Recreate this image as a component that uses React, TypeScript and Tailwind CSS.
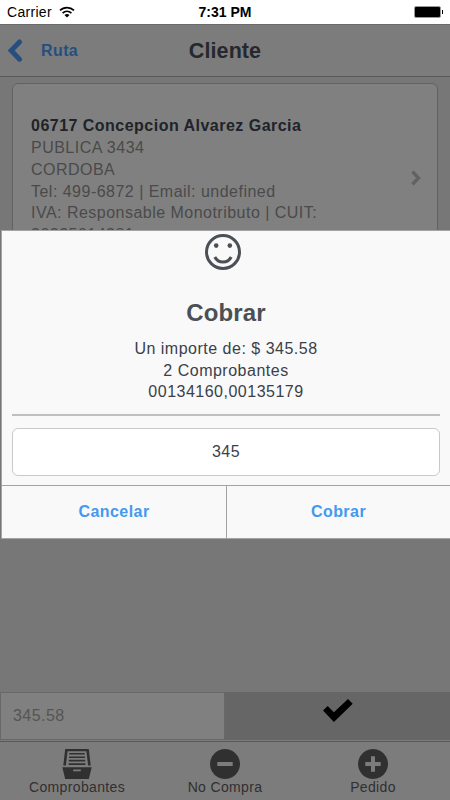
import React from "react";

const lines = [
  "PUBLICA 3434",
  "CORDOBA",
  "Tel: 499-6872 | Email: undefined",
  "IVA: Responsable Monotributo | CUIT:",
  "20225014281",
];

function StatusBar() {
  return (
    <div className="grid h-6 grid-cols-3 items-center bg-white text-[14px] text-black">
      <div className="flex items-center gap-[7px] pl-[7px]">
        <span className="tracking-[0.3px]">Carrier</span>
        <svg width="16" height="12" viewBox="0 0 16 12" fill="none" stroke="#000" strokeWidth="1.7">
          <path d="M1 4.4a10 10 0 0 1 14 0M3.6 7.1a6.2 6.2 0 0 1 8.8 0" />
          <path d="M8 11.6 5.5 9.1a3.6 3.6 0 0 1 5 0z" fill="#000" stroke="none" />
        </svg>
      </div>
      <span className="text-center font-bold">7:31 PM</span>
      <div className="flex items-center justify-end pr-[7px]">
        <div className="h-3 w-[27px] rounded-[2px] border border-[#999] bg-black" />
        <div className="ml-px h-1 w-px bg-black" />
      </div>
    </div>
  );
}

function Header() {
  return (
    <div className="grid h-[53px] grid-cols-3 items-center border-t border-b border-t-[#6b6b6b] border-b-[#595959] bg-[#7c7c7c]">
      <div className="flex items-center pl-[7px]">
        <svg width="16" height="24" viewBox="0 0 16 24" fill="none" stroke="#264f80" strokeWidth="5" strokeLinecap="round" strokeLinejoin="miter">
          <path d="M12.5 3 4.2 11.6l8.3 8.6" />
        </svg>
        <span className="ml-[18px] text-[16px] font-bold tracking-[0.4px] text-[#264f80]">Ruta</span>
      </div>
      <span className="text-center text-[21.5px] leading-[32px] font-bold tracking-[0.1px] text-[#25282c]">Cliente</span>
    </div>
  );
}

function Modal() {
  return (
    <div className="absolute top-[230px] left-[1px] flex h-[309px] w-[449px] flex-col border border-r-0 border-[#a3a3a3] bg-[#f9f9f9] text-center text-[#3b3f4a]">
      <div className="flex h-[43px] justify-center pt-[2px] pr-[7px]">
        <svg width="38" height="38" viewBox="0 0 38 38" fill="none" stroke="#4b4f56" strokeWidth="3">
          <circle cx="19" cy="19" r="16.5" />
          <circle cx="12.2" cy="12.6" r="2.3" fill="#4b4f56" stroke="none" />
          <circle cx="25.8" cy="12.6" r="2.3" fill="#4b4f56" stroke="none" />
          <path d="M10.8 24c3.5 6.8 12.9 6.8 16.4 0" />
        </svg>
      </div>
      <h2 className="mt-[23px] h-[32px] text-[24px] leading-[32px] font-bold tracking-[0.15px] text-[#4b4f56]">Cobrar</h2>
      <div className="mt-[9px] text-[16px] leading-[21.6px] tracking-[0.5px]">
        <p>Un importe de: $ 345.58</p>
        <p>2 Comprobantes</p>
        <p>00134160,00135179</p>
      </div>
      <div className="mx-[10px] mt-[11px] h-[2px] shrink-0 bg-[#bfbfbf]" />
      <div className="mx-[10px] mt-[12px] flex h-[48px] shrink-0 items-center justify-center rounded-[6px] border border-[#c9c9c9] bg-white text-[16px] tracking-[0.45px]">
        345
      </div>
      <div className="mt-auto grid h-[53px] grid-cols-[225px_1fr] border-t border-[#a3a3a3] text-[16px] font-bold tracking-[0.45px] text-[#4499ee]">
        <div className="flex items-center justify-center border-r border-[#a3a3a3]">Cancelar</div>
        <div className="flex items-center justify-center">Cobrar</div>
      </div>
    </div>
  );
}

function Tab({ label, children }: { label: string; children: React.ReactNode }) {
  return (
    <div className="flex flex-1 flex-col items-center pt-[6px]">
      <svg width="30" height="32" viewBox="0 0 30 32" fill="#303030">
        {children}
      </svg>
      <span className="-mt-[1px] text-[14px] leading-[17px] tracking-[0.35px] text-[#303030]">{label}</span>
    </div>
  );
}

export default function App() {
  return (
    <div className="relative flex h-[800px] w-[450px] flex-col overflow-hidden bg-[#777777] font-['Liberation_Sans',Arial,sans-serif]">
      <StatusBar />
      <Header />
      <div className="flex-1 px-3 pt-[6px]">
        <div className="flex h-[193px] items-center justify-between rounded-[6px] border border-[#626262] bg-[#808080] pr-[16px] pl-[18px]">
          <div className="pt-[2px] text-[16px] leading-[21.8px] tracking-[0.48px] text-[#4a4a4a]">
            <p className="font-bold text-[#202329]">06717 Concepcion Alvarez Garcia</p>
            {lines.map((line) => (
              <p key={line}>{line}</p>
            ))}
          </div>
          <svg className="-mt-[3px]" width="10" height="16" viewBox="0 0 10 16" fill="none" stroke="#626262" strokeWidth="3.4">
            <path d="M1.5 1.7 7.5 8l-6 6.3" />
          </svg>
        </div>
      </div>
      <div className="flex h-[48px]">
        <div className="flex w-[225px] items-center border border-[#686868] bg-[#808080] pl-3 text-[16px] tracking-[0.45px] text-[#555555]">
          345.58
        </div>
        <div className="flex flex-1 justify-center bg-[#666666] pt-[6px]">
          <svg width="30" height="25" viewBox="0 0 30 25">
            <path d="M0 12.5 4.7 8l6.2 6.2L25 1l4.7 4.7L10.9 24z" fill="#000" />
          </svg>
        </div>
      </div>
      <div className="h-[1px] bg-[#7b7b7b]" />
      <div className="flex h-[59px] border-t border-[#595959] bg-[#7c7c7c] pr-[3px] pl-[3px]">
        <Tab label="Comprobantes">
          <path d="M3.2 1h23.6l1.9 16.5h-2.6L24.4 3.2H5.6L3.9 17.5H1.3z" />
          <path d="M7.2 5h15.6v1.6H7.2zM7 8.4h16V10H7zM6.8 11.8h16.4v1.6H6.8zM6.6 15.2h16.8v1.7H6.6z" />
          <path fillRule="evenodd" d="M.3 19.3h29.4L26.8 31H3.2zM11.2 21.4v1.9h7.6v-1.9z" />
        </Tab>
        <Tab label="No Compra">
          <path fillRule="evenodd" d="M15 1a15 15 0 1 0 .01 0zM7.3 14h15.4v4H7.3z" />
        </Tab>
        <Tab label="Pedido">
          <path fillRule="evenodd" d="M15 1a15 15 0 1 0 .01 0zM13 8.3h4V14h5.7v4H17v5.7h-4V18H7.3v-4H13z" />
        </Tab>
      </div>
      <Modal />
    </div>
  );
}
